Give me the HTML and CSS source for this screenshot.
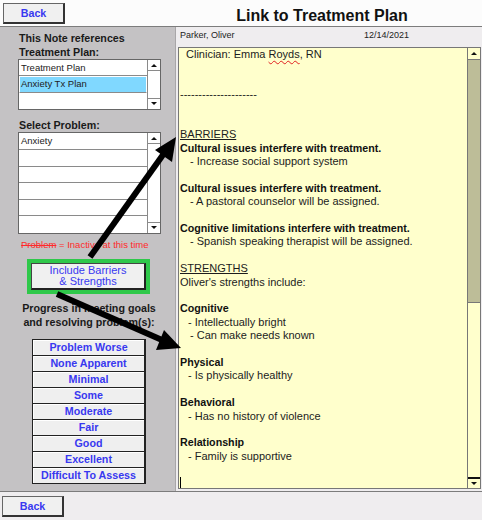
FILE: index.html
```html
<!DOCTYPE html>
<html lang="en">
<head>
    <meta charset="UTF-8">
    <meta name="viewport" content="width=device-width, initial-scale=1.0">
    <title>Link to Treatment Plan</title>
    <link rel="stylesheet" href="styles.css">
</head>
<body>
    <div class="window">
        <header class="topbar">
            <div class="topbar-left">
                <button class="back-btn">Back</button>
            </div>
            <h1 class="title">Link to Treatment Plan</h1>
        </header>

        <main class="main">
            <aside class="sidebar">
                <h2 class="side-heading">This Note references<br>Treatment Plan:</h2>
                <div class="listbox plan-list">
                    <ul class="list-rows">
                        <li>Treatment Plan</li>
                        <li class="selected">Anxiety Tx Plan</li>
                        <li></li>
                    </ul>
                    <div class="list-scroll">
                        <span class="scroll-btn"><i class="arrow-up"></i></span>
                        <span class="scroll-btn"><i class="arrow-down"></i></span>
                    </div>
                </div>

                <h2 class="side-heading problem-heading">Select Problem:</h2>
                <div class="listbox problem-list">
                    <ul class="list-rows">
                        <li>Anxiety</li>
                        <li></li>
                        <li></li>
                        <li></li>
                        <li></li>
                        <li></li>
                    </ul>
                    <div class="list-scroll">
                        <span class="scroll-btn"><i class="arrow-up"></i></span>
                        <span class="scroll-btn"><i class="arrow-down"></i></span>
                    </div>
                </div>
                <p class="inactive-note"><s>Problem</s> = Inactive at this time</p>

                <div class="highlight-box">
                    <button class="include-btn">Include Barriers<br>&amp; Strengths</button>
                </div>

                <h2 class="progress-heading">Progress in meeting goals<br>and resolving problem(s):</h2>
                <div class="progress-list">
                    <button class="progress-btn">Problem Worse</button>
                    <button class="progress-btn">None Apparent</button>
                    <button class="progress-btn">Minimal</button>
                    <button class="progress-btn">Some</button>
                    <button class="progress-btn">Moderate</button>
                    <button class="progress-btn">Fair</button>
                    <button class="progress-btn">Good</button>
                    <button class="progress-btn">Excellent</button>
                    <button class="progress-btn">Difficult To Assess</button>
                </div>
            </aside>

            <section class="note-panel">
                <div class="note-header">
                    <span>Parker, Oliver</span>
                    <span>12/14/2021</span>
                </div>
                <div class="note-box">
                    <div class="note-text">
                        <div class="line clinician">Clinician: Emma <span class="misspelled">Royds</span>, RN</div>
                        <div class="line"></div>
                        <div class="line"></div>
                        <div class="line">---------------------</div>
                        <div class="line"></div>
                        <div class="line"></div>
                        <div class="line underline">BARRIERS</div>
                        <div class="line bold">Cultural issues interfere with treatment.</div>
                        <div class="line indent">- Increase social support system</div>
                        <div class="line"></div>
                        <div class="line bold">Cultural issues interfere with treatment.</div>
                        <div class="line indent">- A pastoral counselor will be assigned.</div>
                        <div class="line"></div>
                        <div class="line bold">Cognitive limitations interfere with treatment.</div>
                        <div class="line indent">- Spanish speaking therapist will be assigned.</div>
                        <div class="line"></div>
                        <div class="line underline">STRENGTHS</div>
                        <div class="line">Oliver's strengths include:</div>
                        <div class="line"></div>
                        <div class="line bold">Cognitive</div>
                        <div class="line indent-sm">- Intellectually bright</div>
                        <div class="line indent">- Can make needs known</div>
                        <div class="line"></div>
                        <div class="line bold">Physical</div>
                        <div class="line indent-sm">- Is physically healthy</div>
                        <div class="line"></div>
                        <div class="line bold">Behavioral</div>
                        <div class="line indent-sm">- Has no history of violence</div>
                        <div class="line"></div>
                        <div class="line bold">Relationship</div>
                        <div class="line indent-sm">- Family is supportive</div>
                        <div class="line"></div>
                        <div class="line"><span class="caret"></span></div>
                    </div>
                    <div class="note-scroll">
                        <span class="note-scroll-up"><i class="arrow-up"></i></span>
                        <span class="note-thumb"></span>
                        <span class="note-track"></span>
                        <span class="note-scroll-down"><i class="arrow-down"></i></span>
                    </div>
                </div>
            </section>
        </main>

        <footer class="bottombar">
            <button class="back-btn">Back</button>
        </footer>

        <!-- callout arrows drawn over the form -->
        <svg class="arrows" width="482" height="520" viewBox="0 0 482 520">
            <line x1="90" y1="257" x2="165" y2="152" stroke="#000" stroke-width="6"/>
            <polygon points="176,137 172,162 155,150" fill="#000"/>
            <line x1="57" y1="294" x2="162" y2="340" stroke="#000" stroke-width="6"/>
            <polygon points="181,348 156,350 164,330" fill="#000"/>
        </svg>
    </div>
</body>
</html>
```

FILE: styles.css
```css
* {
    margin: 0;
    padding: 0;
    box-sizing: border-box;
    font-family: "Liberation Sans", Arial, sans-serif;
}

body {
    background-color: #fcfcfc;
}

.window {
    position: relative;
    width: 482px;
    height: 520px;
    display: flex;
    flex-direction: column;
    overflow: hidden;
}

/* top and bottom bars */

.topbar {
    height: 26px;
    display: grid;
    grid-template-columns: 176px 1fr;
    background: #fcfcfc;
}

.topbar-left {
    padding: 3px 0 0 3px;
}

.title {
    font-size: 16px;
    font-weight: bold;
    line-height: 20px;
    padding: 6px 14px 0 0;
    text-align: center;
    color: #111;
}

.back-btn {
    width: 62px;
    height: 21px;
    background: #f0f0f0;
    border: 1px solid #666;
    border-right: 2px solid #333;
    border-bottom: 2px solid #333;
    color: #3838f0;
    font-size: 10.7px;
    font-weight: bold;
    cursor: pointer;
}

.bottombar {
    height: 28px;
    background: #efedef;
    padding: 4px 0 0 2px;
}

.main {
    flex: 1;
    display: flex;
    border-top: 1px solid #7c7c7c;
    border-bottom: 1px solid #7c7c7c;
}

/* left column */

.sidebar {
    width: 176px;
    background: #c4c2c4;
    padding: 5px 0 0 18px;
    border-right: 1px solid #a8a6a8;
}

.side-heading {
    font-size: 10.7px;
    font-weight: bold;
    line-height: 13.5px;
    color: #1a1a1a;
    padding-left: 1px;
}

.problem-heading {
    margin-top: 9px;
}

.listbox {
    width: 143px;
    display: flex;
    background: white;
    border: 1px solid #666;
}

.list-rows {
    flex: 1;
    list-style: none;
}

.list-rows li {
    height: 16.6px;
    padding: 0 2px;
    font-size: 9.5px;
    line-height: 15.6px;
    color: #222;
    border-bottom: 1px solid #8a8a8a;
}

.plan-list .list-rows li {
    height: 16.3px;
}

.list-rows li:last-child {
    border-bottom: none;
}

.list-rows li.selected {
    background: #80d8ff;
    border: 1px solid white;
    border-bottom: 1px solid #8a8a8a;
    line-height: 14px;
    padding-left: 1px;
}

.list-scroll {
    width: 13px;
    border-left: 1px solid #8a8a8a;
    display: flex;
    flex-direction: column;
    justify-content: space-between;
}

.scroll-btn {
    height: 11px;
    display: flex;
    align-items: center;
    justify-content: center;
    border-bottom: 1px solid #8a8a8a;
}

.scroll-btn:last-child {
    border-bottom: none;
    border-top: 1px solid #8a8a8a;
}

.arrow-up,
.arrow-down {
    display: block;
    width: 0;
    height: 0;
    border-left: 3px solid transparent;
    border-right: 3px solid transparent;
}

.arrow-up {
    border-bottom: 3px solid #111;
}

.arrow-down {
    border-top: 3px solid #111;
}

.inactive-note {
    margin-top: 5px;
    padding-left: 3px;
    font-size: 9.5px;
    line-height: 12px;
    color: #ff2a2a;
}

.highlight-box {
    width: 123px;
    margin: 8px 0 0 9px;
    border: 4px solid #2fc84a;
}

.include-btn {
    display: block;
    width: 100%;
    background: #f0f0f0;
    border: 1px solid #444;
    border-right: 2px solid #222;
    border-bottom: 2px solid #222;
    color: #3838f0;
    font-size: 11px;
    line-height: 11px;
    padding: 1px 0;
}

.progress-heading {
    margin: 7px 0 0 -18px;
    width: 178px;
    text-align: center;
    font-size: 10.7px;
    font-weight: bold;
    line-height: 14px;
    color: #1a1a1a;
}

.progress-list {
    width: 114px;
    margin: 10px 0 0 14px;
    display: flex;
    flex-direction: column;
    border-top: 1px solid #222;
}

.progress-btn {
    height: 16px;
    background: #efefef;
    border: none;
    border-left: 1px solid #222;
    border-right: 2px solid #222;
    border-bottom: 1px solid #222;
    box-shadow: inset 1px 1px 0 #fff;
    color: #3838f0;
    font-size: 10.7px;
    font-weight: bold;
    line-height: 14px;
    cursor: pointer;
}

/* note column */

.note-panel {
    flex: 1;
    background: #efedef;
    padding: 0 1px 0 2px;
}

.note-header {
    height: 20px;
    display: grid;
    grid-template-columns: 184px auto;
    padding-left: 2px;
    font-size: 9px;
    line-height: 16px;
    color: #222;
}

.note-box {
    height: 442px;
    display: flex;
    background: #ffffcc;
    border: 1px solid #777;
    overflow: hidden;
}

.note-text {
    flex: 1;
    padding-left: 1px;
    font-size: 11px;
    color: #1c1c1c;
}

.line {
    height: 13.4px;
    line-height: 13.4px;
    white-space: nowrap;
}

.line.clinician {
    padding-left: 6px;
}

.line.bold {
    font-weight: bold;
    font-size: 10.7px;
    color: #111;
}

.line.underline {
    text-decoration: underline;
}

.line.indent {
    padding-left: 10px;
}

.line.indent-sm {
    padding-left: 8px;
}

.misspelled {
    text-decoration: underline wavy #e02020;
    text-decoration-thickness: 1px;
    text-underline-offset: 2px;
}

.caret {
    display: inline-block;
    width: 1px;
    height: 13px;
    background: #000;
    vertical-align: middle;
}

.note-scroll {
    width: 13px;
    display: flex;
    flex-direction: column;
    border-left: 1px solid #777;
}

.note-scroll-up,
.note-scroll-down {
    height: 11px;
    display: flex;
    align-items: center;
    justify-content: center;
}

.note-thumb {
    height: 244px;
    background: #bdbd98;
    border-top: 1px solid #777;
    border-bottom: 1px solid #777;
}

.note-track {
    flex: 1;
}

.note-scroll-down {
    border-top: 2px solid #111;
}

.arrows {
    position: absolute;
    top: 0;
    left: 0;
    pointer-events: none;
}
```
